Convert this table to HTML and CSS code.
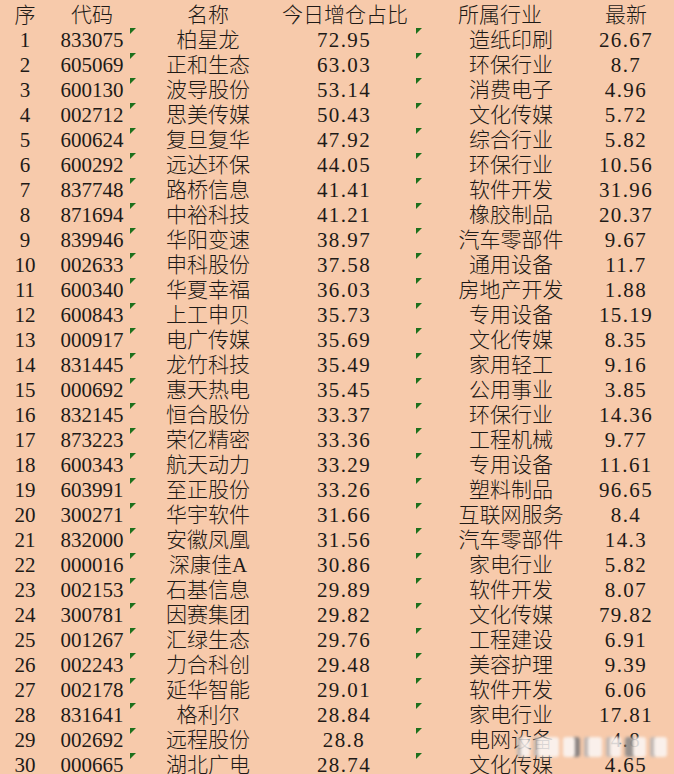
FILE: index.html
```html
<!DOCTYPE html>
<html lang="zh">
<head>
<meta charset="utf-8">
<link rel="stylesheet" href="styles.css">
</head>
<body>
<div class="sheet">
  <div class="row head">
    <div class="c c1">序</div><div class="c c2">代码</div><div class="c c3">名称</div><div class="c c4">今日增仓占比</div><div class="c c5">所属行业</div><div class="c c6">最新</div>
  </div>
  <div class="row"><div class="c c1">1</div><div class="c c2">833075</div><div class="c c3">柏星龙</div><div class="c c4">72.95</div><div class="c c5">造纸印刷</div><div class="c c6">26.67</div></div>
  <div class="row"><div class="c c1">2</div><div class="c c2">605069</div><div class="c c3">正和生态</div><div class="c c4">63.03</div><div class="c c5">环保行业</div><div class="c c6">8.7</div></div>
  <div class="row"><div class="c c1">3</div><div class="c c2">600130</div><div class="c c3">波导股份</div><div class="c c4">53.14</div><div class="c c5">消费电子</div><div class="c c6">4.96</div></div>
  <div class="row"><div class="c c1">4</div><div class="c c2">002712</div><div class="c c3">思美传媒</div><div class="c c4">50.43</div><div class="c c5">文化传媒</div><div class="c c6">5.72</div></div>
  <div class="row"><div class="c c1">5</div><div class="c c2">600624</div><div class="c c3">复旦复华</div><div class="c c4">47.92</div><div class="c c5">综合行业</div><div class="c c6">5.82</div></div>
  <div class="row"><div class="c c1">6</div><div class="c c2">600292</div><div class="c c3">远达环保</div><div class="c c4">44.05</div><div class="c c5">环保行业</div><div class="c c6">10.56</div></div>
  <div class="row"><div class="c c1">7</div><div class="c c2">837748</div><div class="c c3">路桥信息</div><div class="c c4">41.41</div><div class="c c5">软件开发</div><div class="c c6">31.96</div></div>
  <div class="row"><div class="c c1">8</div><div class="c c2">871694</div><div class="c c3">中裕科技</div><div class="c c4">41.21</div><div class="c c5">橡胶制品</div><div class="c c6">20.37</div></div>
  <div class="row"><div class="c c1">9</div><div class="c c2">839946</div><div class="c c3">华阳变速</div><div class="c c4">38.97</div><div class="c c5">汽车零部件</div><div class="c c6">9.67</div></div>
  <div class="row"><div class="c c1">10</div><div class="c c2">002633</div><div class="c c3">申科股份</div><div class="c c4">37.58</div><div class="c c5">通用设备</div><div class="c c6">11.7</div></div>
  <div class="row"><div class="c c1">11</div><div class="c c2">600340</div><div class="c c3">华夏幸福</div><div class="c c4">36.03</div><div class="c c5">房地产开发</div><div class="c c6">1.88</div></div>
  <div class="row"><div class="c c1">12</div><div class="c c2">600843</div><div class="c c3">上工申贝</div><div class="c c4">35.73</div><div class="c c5">专用设备</div><div class="c c6">15.19</div></div>
  <div class="row"><div class="c c1">13</div><div class="c c2">000917</div><div class="c c3">电广传媒</div><div class="c c4">35.69</div><div class="c c5">文化传媒</div><div class="c c6">8.35</div></div>
  <div class="row"><div class="c c1">14</div><div class="c c2">831445</div><div class="c c3">龙竹科技</div><div class="c c4">35.49</div><div class="c c5">家用轻工</div><div class="c c6">9.16</div></div>
  <div class="row"><div class="c c1">15</div><div class="c c2">000692</div><div class="c c3">惠天热电</div><div class="c c4">35.45</div><div class="c c5">公用事业</div><div class="c c6">3.85</div></div>
  <div class="row"><div class="c c1">16</div><div class="c c2">832145</div><div class="c c3">恒合股份</div><div class="c c4">33.37</div><div class="c c5">环保行业</div><div class="c c6">14.36</div></div>
  <div class="row"><div class="c c1">17</div><div class="c c2">873223</div><div class="c c3">荣亿精密</div><div class="c c4">33.36</div><div class="c c5">工程机械</div><div class="c c6">9.77</div></div>
  <div class="row"><div class="c c1">18</div><div class="c c2">600343</div><div class="c c3">航天动力</div><div class="c c4">33.29</div><div class="c c5">专用设备</div><div class="c c6">11.61</div></div>
  <div class="row"><div class="c c1">19</div><div class="c c2">603991</div><div class="c c3">至正股份</div><div class="c c4">33.26</div><div class="c c5">塑料制品</div><div class="c c6">96.65</div></div>
  <div class="row"><div class="c c1">20</div><div class="c c2">300271</div><div class="c c3">华宇软件</div><div class="c c4">31.66</div><div class="c c5">互联网服务</div><div class="c c6">8.4</div></div>
  <div class="row"><div class="c c1">21</div><div class="c c2">832000</div><div class="c c3">安徽凤凰</div><div class="c c4">31.56</div><div class="c c5">汽车零部件</div><div class="c c6">14.3</div></div>
  <div class="row"><div class="c c1">22</div><div class="c c2">000016</div><div class="c c3">深康佳A</div><div class="c c4">30.86</div><div class="c c5">家电行业</div><div class="c c6">5.82</div></div>
  <div class="row"><div class="c c1">23</div><div class="c c2">002153</div><div class="c c3">石基信息</div><div class="c c4">29.89</div><div class="c c5">软件开发</div><div class="c c6">8.07</div></div>
  <div class="row"><div class="c c1">24</div><div class="c c2">300781</div><div class="c c3">因赛集团</div><div class="c c4">29.82</div><div class="c c5">文化传媒</div><div class="c c6">79.82</div></div>
  <div class="row"><div class="c c1">25</div><div class="c c2">001267</div><div class="c c3">汇绿生态</div><div class="c c4">29.76</div><div class="c c5">工程建设</div><div class="c c6">6.91</div></div>
  <div class="row"><div class="c c1">26</div><div class="c c2">002243</div><div class="c c3">力合科创</div><div class="c c4">29.48</div><div class="c c5">美容护理</div><div class="c c6">9.39</div></div>
  <div class="row"><div class="c c1">27</div><div class="c c2">002178</div><div class="c c3">延华智能</div><div class="c c4">29.01</div><div class="c c5">软件开发</div><div class="c c6">6.06</div></div>
  <div class="row"><div class="c c1">28</div><div class="c c2">831641</div><div class="c c3">格利尔</div><div class="c c4">28.84</div><div class="c c5">家电行业</div><div class="c c6">17.81</div></div>
  <div class="row"><div class="c c1">29</div><div class="c c2">002692</div><div class="c c3">远程股份</div><div class="c c4">28.8</div><div class="c c5">电网设备</div><div class="c c6">4.8</div></div>
  <div class="row"><div class="c c1">30</div><div class="c c2">000665</div><div class="c c3">湖北广电</div><div class="c c4">28.74</div><div class="c c5">文化传媒</div><div class="c c6">4.65</div></div>
  <div class="watermark" aria-hidden="true">
    <span class="blob b1"></span><span class="blob b2"></span><span class="blob b3"></span><span class="blob b4"></span><span class="blob b5"></span><span class="blob b6"></span><span class="blob b7"></span>
  </div>
</div>
</body>
</html>
```

FILE: styles.css
```css
html, body {
  margin: 0;
  padding: 0;
  overflow: hidden;
  background: #f7caab;
}
.sheet {
  position: relative;
  width: 674px;
  font-family: "Liberation Serif", "Noto Sans CJK SC", serif;
  font-size: 21px;
  font-weight: 300;
  color: #1e1a17;
}
.row {
  position: relative;
  display: grid;
  grid-template-columns: 50px 84px 148px 124px 180px 88px;
  height: 25px;
  line-height: 25px;
}
.row.head {
  height: 25px;
  padding-top: 3px;
}
.c {
  text-align: center;
  white-space: nowrap;
}
.row:not(.head) .c4,
.row:not(.head) .c6 { letter-spacing: 1.4px; }
.c5 { padding-left: 30px; }
.head .c5 { padding-left: 8px; }
.c6 { padding-right: 8px; }
.row:not(.head)::before,
.row:not(.head)::after {
  content: "";
  position: absolute;
  top: 0;
  width: 6px;
  height: 6px;
  background: #1d701c;
  clip-path: polygon(0 0, 100% 0, 0 100%);
}
.row:not(.head)::before { left: 130px; }
.row:not(.head)::after { left: 416px; }
.watermark {
  position: absolute;
  left: 517px;
  top: 735px;
  width: 150px;
  height: 24px;
  display: flex;
  align-items: center;
  gap: 4px;
  filter: blur(1.5px);
}
.blob {
  display: block;
  height: 20px;
  background: rgba(250, 247, 246, 0.85);
  border-radius: 3px;
  box-shadow: inset 4px 0 0 rgba(120, 112, 110, 0.45);
}
.b1 { width: 14px; }
.b2 { width: 26px; }
.b3 { width: 18px; box-shadow: inset -5px 0 0 rgba(60, 55, 55, 0.6); }
.b4 { width: 20px; }
.b5 { width: 16px; }
.b6 { width: 22px; box-shadow: inset 8px 0 0 rgba(70, 65, 65, 0.55); }
.b7 { width: 18px; }
```
